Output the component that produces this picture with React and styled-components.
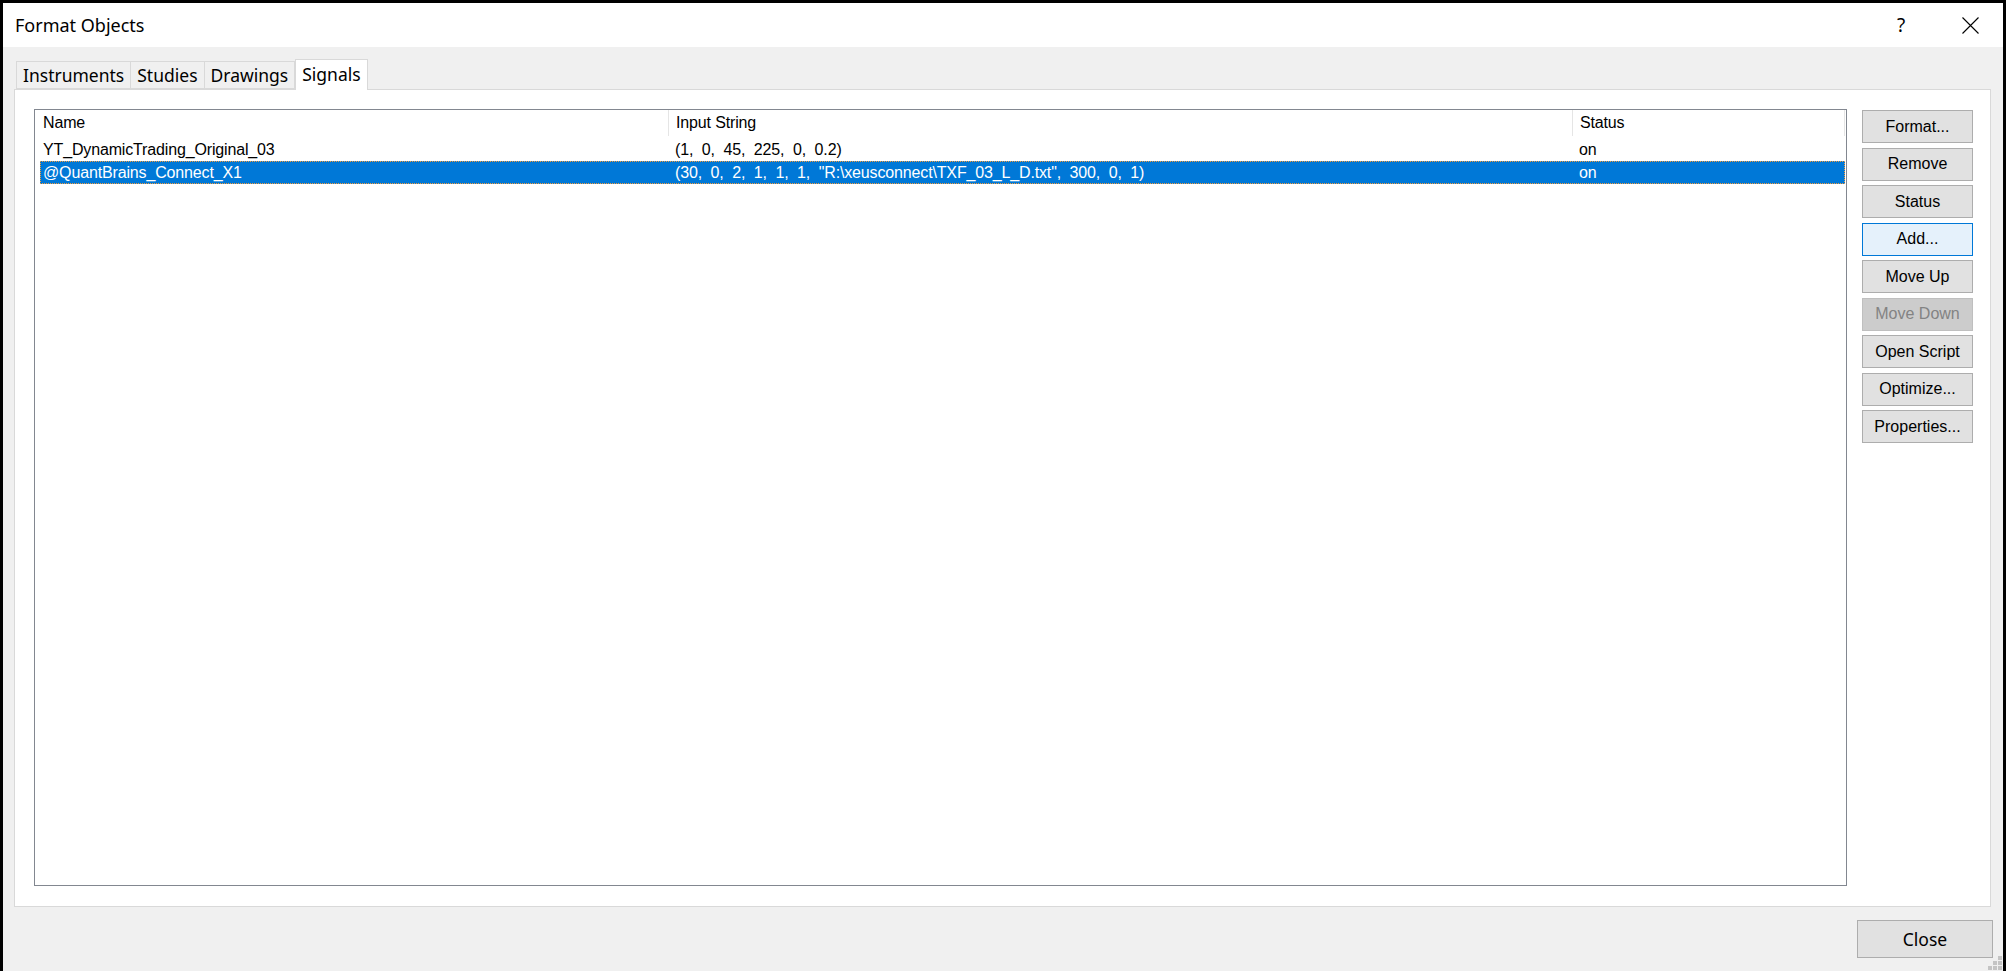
import React from 'react';
import styled, { createGlobalStyle } from 'styled-components';

const GlobalStyle = createGlobalStyle`
  html, body {
    margin: 0;
    padding: 0;
    background: #000;
    overflow: hidden;
  }
  * {
    box-sizing: border-box;
  }
`;

const uiFont = `"Noto Sans", "Open Sans", sans-serif`;
const listFont = `"Liberation Sans", Arial, sans-serif`;

const Window = styled.div`
  margin: 3px 3px 0 3px;
  height: 968px;
  background: #f0f0f0;
  display: flex;
  flex-direction: column;
  position: relative;
  font-family: ${uiFont};
`;

const TitleBar = styled.div`
  height: 44px;
  background: #fff;
  display: flex;
  align-items: center;
  padding-left: 12px;
`;

const Title = styled.div`
  flex: 1;
  font-size: 18px;
  color: #000;
`;

const CaptionButton = styled.div`
  width: ${(p) => p.w}px;
  height: 44px;
  display: flex;
  align-items: center;
  justify-content: center;
  font-size: 19px;
  color: #000;
`;

const TabStrip = styled.div`
  display: flex;
  align-items: flex-end;
  margin: 12px 0 0 13px;
  position: relative;
  z-index: 1;
`;

const Tab = styled.div`
  height: ${(p) => (p.active ? 31 : 28)}px;
  padding: 0 6px;
  padding-bottom: ${(p) => (p.active ? 3 : 0)}px;
  margin-bottom: ${(p) => (p.active ? -1 : 0)}px;
  background: ${(p) => (p.active ? '#fff' : '#f0f0f0')};
  border: 1px solid #d9d9d9;
  border-bottom: ${(p) => (p.active ? 'none' : '1px solid #d9d9d9')};
  border-left: ${(p) => (p.first || p.active ? '1px solid #d9d9d9' : 'none')};
  display: flex;
  align-items: center;
  font-size: 17.5px;
  color: #000;
  white-space: nowrap;
`;

const Panel = styled.div`
  flex: 1;
  margin: 0 12px 0 11px;
  background: #fff;
  border: 1px solid #d9d9d9;
  display: flex;
  padding: 19px 17px 20px 19px;
  min-height: 0;
`;

const List = styled.div`
  flex: 1;
  min-width: 0;
  border: 1px solid #828790;
  background: #fff;
  padding: 0 1px 0 5px;
  font-family: ${listFont};
  font-size: 16px;
  letter-spacing: -0.15px;
  color: #000;
  overflow: hidden;
`;

const Header = styled.div`
  display: grid;
  grid-template-columns: 628px 904px 272px 1fr;
  height: 28px;
`;

const HeadCell = styled.div`
  display: flex;
  align-items: center;
  padding-left: ${(p) => (p.first ? 3 : 7)}px;
  margin-bottom: 2px;
  border-left: ${(p) => (p.first ? 'none' : '1px solid #e5e5e5')};
`;

const Row = styled.div`
  display: grid;
  grid-template-columns: 628px 904px 1fr;
  height: 23px;
  align-items: center;
  background: ${(p) => (p.selected ? '#0078d7' : 'transparent')};
  color: ${(p) => (p.selected ? '#fff' : '#000')};
  outline: ${(p) => (p.selected ? '1px dotted #f39c3c' : 'none')};
  outline-offset: -1px;
`;

const Cell = styled.div`
  padding-left: ${(p) => (p.first ? 3 : 7)}px;
  white-space: pre;
  overflow: hidden;
`;

const ButtonColumn = styled.div`
  flex: 0 0 111px;
  margin-left: 15px;
  padding-top: 1px;
  display: flex;
  flex-direction: column;
  gap: 4.5px;
`;

const SideButton = styled.div`
  height: 33px;
  display: flex;
  align-items: center;
  justify-content: center;
  font-family: ${listFont};
  font-size: 16px;
  color: ${(p) => (p.disabled ? '#838383' : '#000')};
  background: ${(p) => (p.focus ? '#e5f1fb' : p.disabled ? '#cccccc' : '#e1e1e1')};
  border: 1px solid ${(p) => (p.focus ? '#0078d7' : p.disabled ? '#bfbfbf' : '#adadad')};
`;

const Footer = styled.div`
  display: flex;
  justify-content: flex-end;
  padding: 13px 10px 13px 0;
`;

const CloseButton = styled.div`
  width: 136px;
  height: 38px;
  display: flex;
  align-items: center;
  justify-content: center;
  font-size: 17.5px;
  color: #000;
  background: #e1e1e1;
  border: 1px solid #adadad;
`;

const Grip = styled.svg`
  position: absolute;
  right: 1px;
  bottom: 1px;
`;

const tabs = [
  { label: 'Instruments' },
  { label: 'Studies' },
  { label: 'Drawings' },
  { label: 'Signals', active: true },
];

const rows = [
  {
    name: 'YT_DynamicTrading_Original_03',
    input: '(1,  0,  45,  225,  0,  0.2)',
    status: 'on',
  },
  {
    name: '@QuantBrains_Connect_X1',
    input: '(30,  0,  2,  1,  1,  1,  "R:\\xeusconnect\\TXF_03_L_D.txt",  300,  0,  1)',
    status: 'on',
    selected: true,
  },
];

const buttons = [
  { label: 'Format...' },
  { label: 'Remove' },
  { label: 'Status' },
  { label: 'Add...', focus: true },
  { label: 'Move Up' },
  { label: 'Move Down', disabled: true },
  { label: 'Open Script' },
  { label: 'Optimize...' },
  { label: 'Properties...' },
];

export default function App() {
  return (
    <>
      <GlobalStyle />
      <Window>
        <TitleBar>
          <Title>Format Objects</Title>
          <CaptionButton w={72}>?</CaptionButton>
          <CaptionButton w={66}>
            <svg width="17" height="17" viewBox="0 0 17 17">
              <path d="M0.5 0.5 L16.5 16.5 M16.5 0.5 L0.5 16.5" stroke="#000" strokeWidth="1.1" fill="none" />
            </svg>
          </CaptionButton>
        </TitleBar>

        <TabStrip>
          {tabs.map((t, i) => (
            <Tab key={t.label} active={t.active} first={i === 0}>
              {t.label}
            </Tab>
          ))}
        </TabStrip>

        <Panel>
          <List>
            <Header>
              <HeadCell first>Name</HeadCell>
              <HeadCell>Input String</HeadCell>
              <HeadCell>Status</HeadCell>
              <HeadCell />
            </Header>
            {rows.map((r) => (
              <Row key={r.name} selected={r.selected}>
                <Cell first>{r.name}</Cell>
                <Cell>{r.input}</Cell>
                <Cell>{r.status}</Cell>
              </Row>
            ))}
          </List>
          <ButtonColumn>
            {buttons.map((b) => (
              <SideButton key={b.label} focus={b.focus} disabled={b.disabled}>
                {b.label}
              </SideButton>
            ))}
          </ButtonColumn>
        </Panel>

        <Footer>
          <CloseButton>Close</CloseButton>
        </Footer>

        <Grip width="14" height="14" viewBox="0 0 14 14">
          {[
            [10, 0], [10, 5], [5, 5], [10, 10], [5, 10], [0, 10],
          ].map(([x, y]) => (
            <rect key={`${x}-${y}`} x={x} y={y} width="4" height="4" fill="#c4c4c4" />
          ))}
        </Grip>
      </Window>
    </>
  );
}
